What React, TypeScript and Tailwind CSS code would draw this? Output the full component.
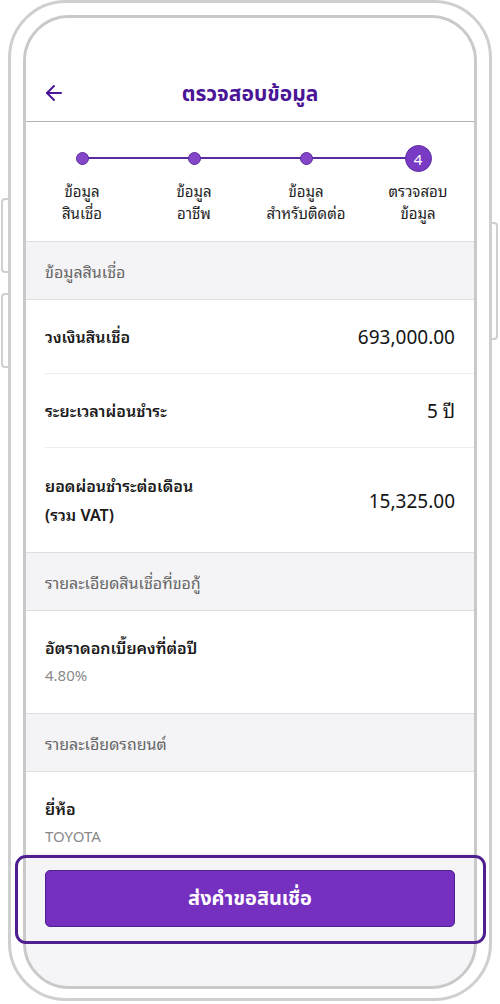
import { ArrowLeft } from "lucide-react";

const font = {
  fontFamily: '"Noto Sans Thai Looped", "Noto Sans Thai", "Noto Sans", "Liberation Sans", sans-serif',
};

const loopless = {
  fontFamily: '"Noto Sans Thai", "Noto Sans", "Liberation Sans", sans-serif',
};

const steps = [
  ["ข้อมูล", "สินเชื่อ"],
  ["ข้อมูล", "อาชีพ"],
  ["ข้อมูล", "สำหรับติดต่อ"],
  ["ตรวจสอบ", "ข้อมูล"],
];

function SectionHeader({ title }: { title: string }) {
  return (
    <div className="h-[59px] bg-[#f4f4f6] border-t border-b border-[#dedee2] flex items-center px-[19px]">
      <span className="text-[16px] text-[#666666]">{title}</span>
    </div>
  );
}

function Row({ label, value, inset = true, tall = false }: { label: React.ReactNode; value: string; inset?: boolean; tall?: boolean }) {
  return (
    <div className={`pl-[19px] ${tall ? "h-[104px]" : "h-[74px]"}`}>
      <div className={`h-full flex items-center justify-between pr-[19px] ${inset ? "border-b border-[#ececef]" : ""}`}>
        <div className="text-[16px] font-semibold text-[#1a1a1a] leading-[29px]">{label}</div>
        <div className="text-[19px] text-[#141414]">{value}</div>
      </div>
    </div>
  );
}

function DetailRow({ label, value, h }: { label: string; value: string; h: string }) {
  return (
    <div className={`px-[19px] pt-[22px] ${h}`}>
      <div className="text-[16px] font-semibold text-[#1a1a1a] leading-[28px]">{label}</div>
      <div className="text-[15px] text-[#8a8a8a] leading-[26px]">{value}</div>
    </div>
  );
}

export default function App() {
  return (
    <div className="relative w-[500px] h-[1004px] bg-white overflow-hidden" style={font}>
      {/* side buttons */}
      <div className="absolute left-[1px] top-[198px] w-[10px] h-[75px] border-2 border-r-0 border-[#cfcfcf] rounded-l-[4px] bg-white" />
      <div className="absolute left-[1px] top-[293px] w-[10px] h-[75px] border-2 border-r-0 border-[#cfcfcf] rounded-l-[4px] bg-white" />
      <div className="absolute right-[2px] top-[222px] w-[10px] h-[118px] border-2 border-l-0 border-[#cfcfcf] rounded-r-[4px] bg-white" />

      {/* phone frame */}
      <div className="relative ml-[8px] w-[484px] h-[1001px] border-[3px] border-[#cfcfcf] rounded-[58px] bg-white px-[12px] pt-[12px]">
        <div className="h-[974px] border-[3px] border-[#c9c9c9] rounded-[46px] overflow-hidden flex flex-col bg-[#f5f5f7]">
          <div className="bg-white">
            {/* header */}
            <div className="h-[104px] flex items-end border-b border-[#b3b3b3]">
              <div className="relative w-full h-[52px] flex items-center justify-center">
                <ArrowLeft className="absolute left-[16px] top-[12px] text-[#4a1596]" size={24} strokeWidth={2} />
                <span className="text-[21px] font-bold text-[#4a1596]" style={loopless}>ตรวจสอบข้อมูล</span>
              </div>
            </div>

            {/* stepper */}
            <div className="relative h-[119px] pt-[23px]">
              <div className="absolute left-[12.5%] right-[12.5%] top-[35px] h-[2px] bg-[#5b2aa0]" />
              <div className="relative grid grid-cols-4">
                {steps.map((s, i) => (
                  <div key={i} className="flex flex-col items-center">
                    <div className="h-[26px] flex items-center justify-center">
                      {i < 3 ? (
                        <div className="w-[13px] h-[13px] rounded-full bg-[#8547c9] border border-[#5b2aa0]" />
                      ) : (
                        <div className="w-[27px] h-[27px] rounded-full bg-[#7a3bc4] border border-[#5b2aa0] flex items-center justify-center text-white text-[15px]">
                          4
                        </div>
                      )}
                    </div>
                    <p className="mt-[8px] text-center text-[15px] leading-[22px] text-[#1e1e1e]">
                      {s[0]}
                      <br />
                      {s[1]}
                    </p>
                  </div>
                ))}
              </div>
            </div>

            <SectionHeader title="ข้อมูลสินเชื่อ" />
            <Row label="วงเงินสินเชื่อ" value="693,000.00" />
            <Row label="ระยะเวลาผ่อนชำระ" value="5 ปี" />
            <Row
              label={
                <>
                  ยอดผ่อนชำระต่อเดือน
                  <br />
                  (รวม VAT)
                </>
              }
              value="15,325.00"
              inset={false}
              tall
            />
            <SectionHeader title="รายละเอียดสินเชื่อที่ขอกู้" />
            <DetailRow label="อัตราดอกเบี้ยคงที่ต่อปี" value="4.80%" h="h-[102px]" />
            <SectionHeader title="รายละเอียดรถยนต์" />
            <DetailRow label="ยี่ห้อ" value="TOYOTA" h="h-[81px]" />
          </div>

          {/* bottom bar */}
          <div className="flex-1 bg-[#f5f5f7] px-[19px] pt-[17px]">
            <button className="w-full h-[57px] rounded-[5px] bg-[#7530c0] border border-[#4d1f8f] text-white text-[20px] font-bold" style={loopless}>
              ส่งคำขอสินเชื่อ
            </button>
          </div>
        </div>
      </div>

      {/* highlight outline */}
      <div className="absolute left-[15px] top-[855px] w-[471px] h-[89px] border-[3px] border-[#4d1f8f] rounded-[11px]" />
    </div>
  );
}
